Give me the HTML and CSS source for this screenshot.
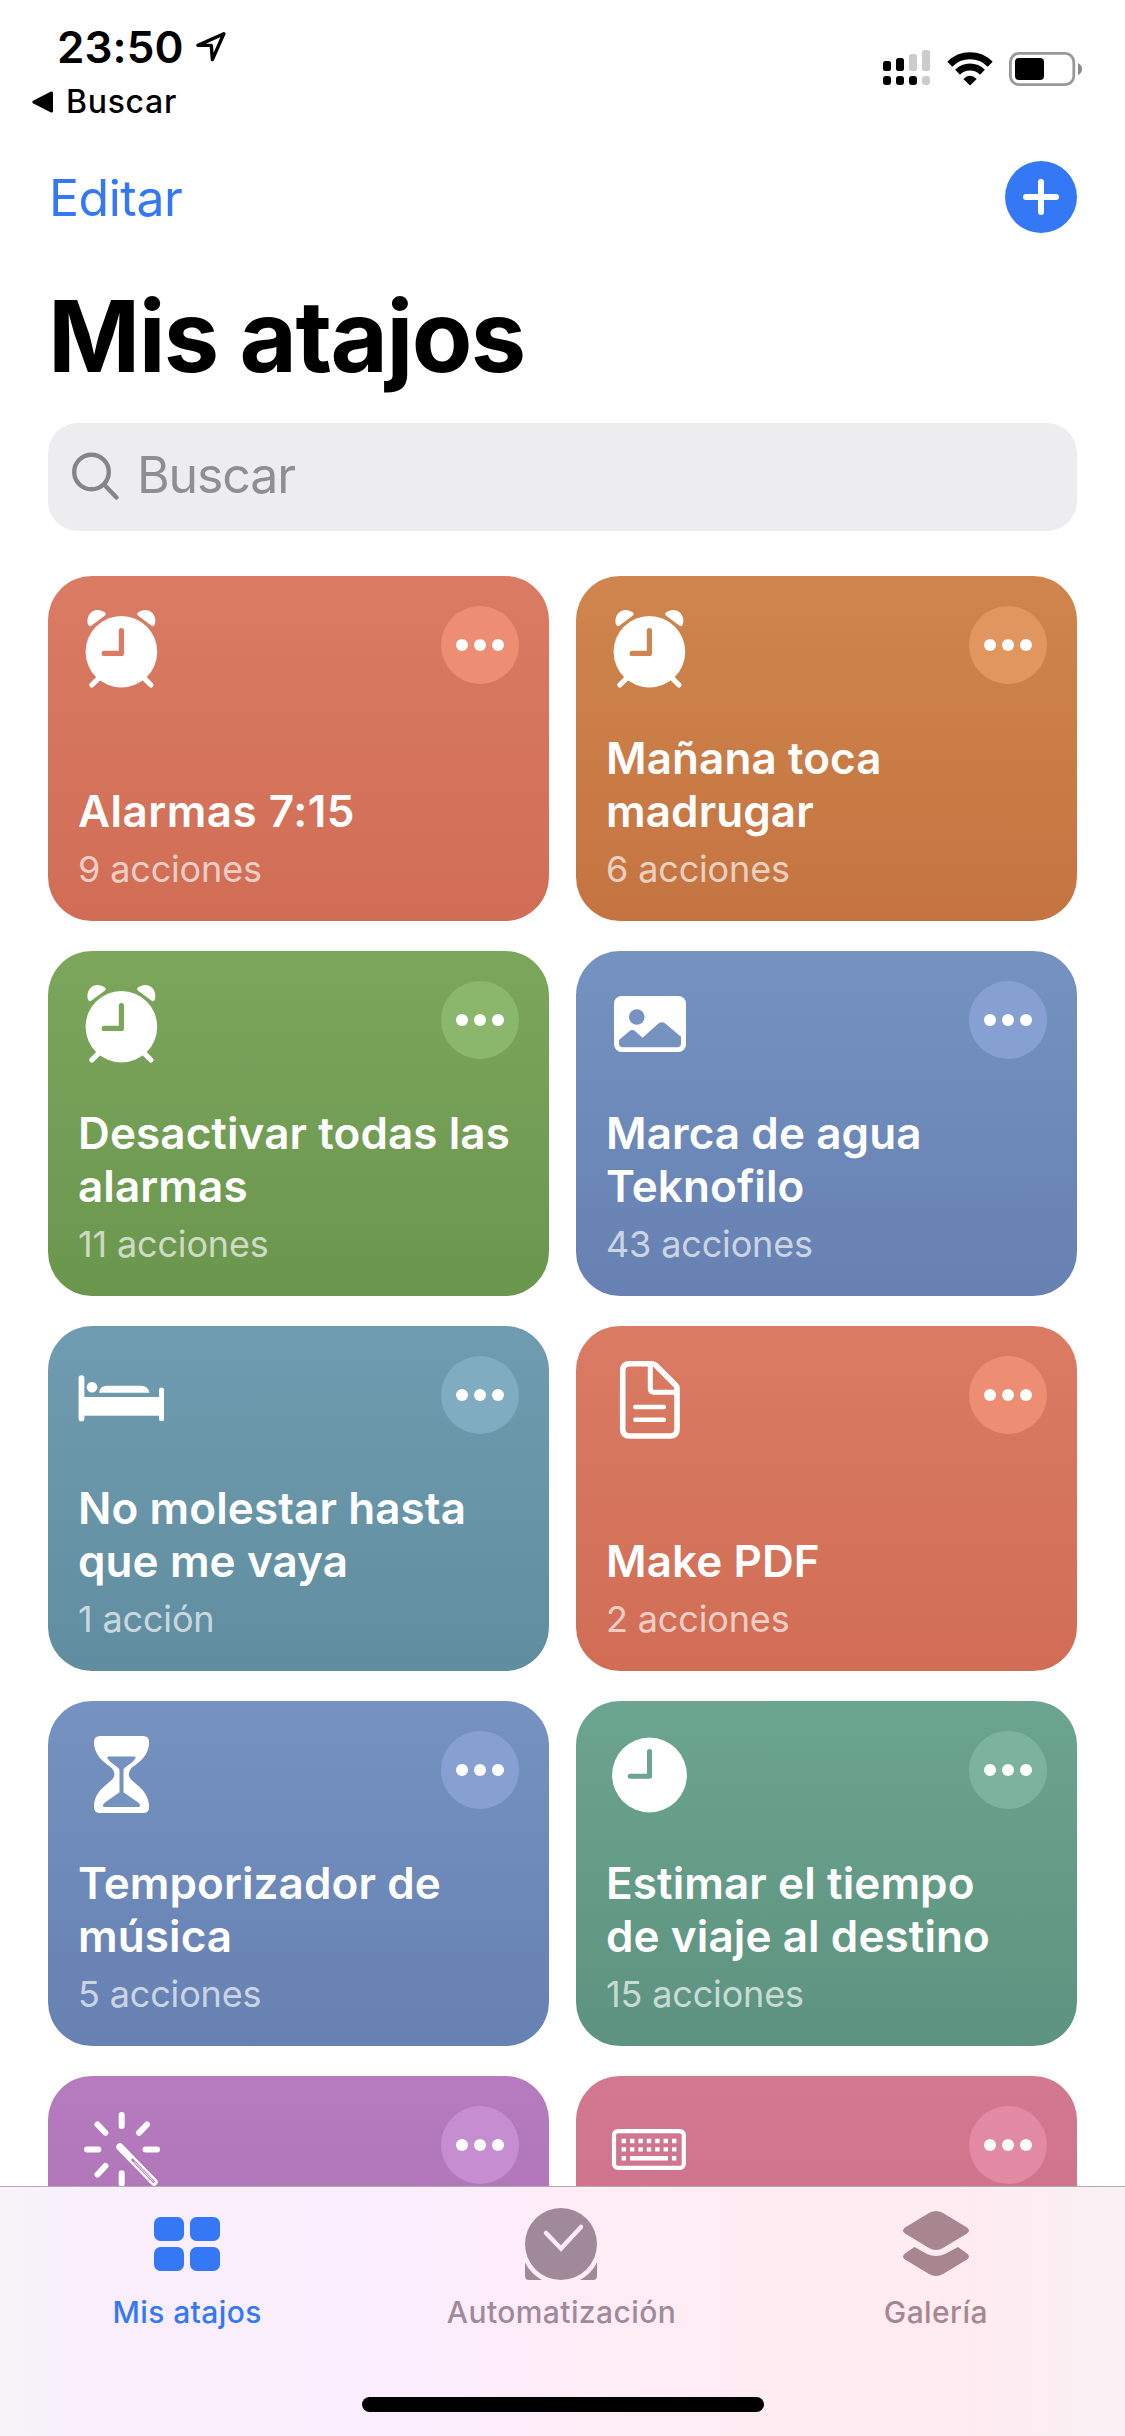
FILE: index.html
```html
<!DOCTYPE html>
<html lang="es">
<head>
    <meta charset="UTF-8">
    <meta name="viewport" content="width=device-width, initial-scale=1.0">
    <title>Mis atajos</title>
    <link rel="stylesheet" href="styles.css">
</head>
<body>
<!-- shared icons -->
<svg class="sprite" width="0" height="0">
    <symbol id="alarm" viewBox="0 0 87 87">
        <path d="M13.5 19.6L27 9.6Q28.6 8.2 27 6.6C22 3 16 3.3 12.5 7C9.5 10 9 14.5 9.8 18Q10.8 21.2 13.5 19.6Z"/>
        <path d="M73.3 19.6L59.8 9.6Q58.2 8.2 59.8 6.6C64.8 3 70.8 3.3 74.3 7C77.3 10 77.8 14.5 77 18Q76 21.2 73.3 19.6Z"/>
        <circle cx="43.4" cy="45.8" r="35.8"/>
        <path class="line" stroke-width="5.2" d="M13.8 79L20 72.8M73 79L66.8 72.8"/>
        <path class="cut-line" stroke-width="5.2" d="M43.4 24.6V47.4H26.2"/>
    </symbol>
    <symbol id="more" viewBox="0 0 78 78">
        <circle cx="21" cy="39" r="6"/><circle cx="39" cy="39" r="6"/><circle cx="57" cy="39" r="6"/>
    </symbol>
</svg>

<div class="phone">
    <header class="status">
        <div class="status-left">
            <div class="time">23:50
                <svg class="location" viewBox="0 0 30 30" width="30" height="30"><path d="M27.8 1.8L2 13.4H15.3L16.4 27.6Z"/></svg>
            </div>
            <div class="back">
                <svg viewBox="0 0 21 22" width="21" height="22"><path d="M19 0.6Q21 0 21 2V20Q21 22 19 21.4L1 12.3Q-0.5 11 1 9.7Z"/></svg>
                <span>Buscar</span>
            </div>
        </div>
        <div class="status-right">
            <svg viewBox="0 0 48 36" width="48" height="36">
                <rect x="0" y="11" width="8" height="10" rx="2.5"/><rect x="13" y="8" width="8" height="13" rx="2.5"/>
                <rect class="off" x="26" y="4" width="8" height="17" rx="2.5"/><rect class="off" x="39" y="0" width="8" height="21" rx="2.5"/>
                <rect x="0" y="26" width="8" height="9" rx="3"/><rect x="13" y="26" width="8" height="9" rx="3"/>
                <rect x="26" y="26" width="8" height="9" rx="3"/><rect class="off" x="39" y="26" width="8" height="9" rx="3"/>
            </svg>
            <svg class="wifi" viewBox="0 0 46 34" width="46" height="34">
                <path class="arc" d="M2.8 12.2A28.5 28.5 0 0 1 43.2 12.2M10.6 20.2A17.5 17.5 0 0 1 35.4 20.2"/>
                <path d="M16.3 27Q23 20.5 29.7 27L23 33.6Z"/>
            </svg>
            <svg viewBox="0 0 74 34" width="74" height="34">
                <rect class="shell" x="1.4" y="1.4" width="63.4" height="31.2" rx="8.5"/>
                <rect x="6" y="6" width="29" height="22" rx="4"/>
                <path class="nub" d="M69 11Q73 13 73 17Q73 21 69 23Z"/>
            </svg>
        </div>
    </header>

    <nav class="navbar">
        <a class="edit">Editar</a>
        <svg class="add" viewBox="0 0 72 72" width="72" height="72"><circle cx="36" cy="36" r="36"/><path d="M36 21V51M21 36H51"/></svg>
    </nav>

    <h1>Mis atajos</h1>

    <div class="search">
        <svg viewBox="0 0 48 49" width="48" height="49"><circle cx="19.5" cy="20" r="17.3"/><path d="M32 32.5L44.5 45.5"/></svg>
        <span>Buscar</span>
    </div>

    <main class="shortcuts">
        <article class="card red">
            <div class="card-top">
                <svg class="icon"><use href="#alarm"/></svg>
                <svg class="more"><use href="#more"/></svg>
            </div>
            <h2 class="digits">Alarmas 7:15</h2>
            <p>9 acciones</p>
        </article>
        <article class="card orange">
            <div class="card-top">
                <svg class="icon"><use href="#alarm"/></svg>
                <svg class="more"><use href="#more"/></svg>
            </div>
            <h2>Mañana toca madrugar</h2>
            <p>6 acciones</p>
        </article>
        <article class="card green">
            <div class="card-top">
                <svg class="icon"><use href="#alarm"/></svg>
                <svg class="more"><use href="#more"/></svg>
            </div>
            <h2>Desactivar todas las alarmas</h2>
            <p>11 acciones</p>
        </article>
        <article class="card blue">
            <div class="card-top">
                <svg class="icon" viewBox="0 0 87 87">
                    <rect x="8" y="15" width="72" height="56" rx="7.5"/>
                    <circle class="cut" cx="30.8" cy="36" r="7.8"/>
                    <path class="cut" d="M13 59L23.3 50.2Q26.3 48 29.3 50.2L36.6 56.7L52.5 42.5Q55.9 39.8 59.3 42.5L75 55.8V62.5Q75 66.3 71 66.3H17Q13 66.3 13 62.5Z"/>
                </svg>
                <svg class="more"><use href="#more"/></svg>
            </div>
            <h2>Marca de agua Teknofilo</h2>
            <p>43 acciones</p>
        </article>
        <article class="card teal">
            <div class="card-top">
                <svg class="icon" viewBox="0 0 87 87">
                    <rect x="0.6" y="19.3" width="5.8" height="46" rx="2.9"/>
                    <rect x="81" y="31.5" width="5" height="33.8" rx="2.5"/>
                    <rect x="5" y="41" width="78" height="18.7"/>
                    <circle cx="14" cy="31.3" r="5.3"/>
                    <path d="M21 36.8Q22 29.7 29 29.7H63Q70 29.7 71.5 36.8Z"/>
                </svg>
                <svg class="more"><use href="#more"/></svg>
            </div>
            <h2>No molestar hasta que me vaya</h2>
            <p>1 acción</p>
        </article>
        <article class="card red">
            <div class="card-top">
                <svg class="icon" viewBox="0 0 87 87">
                    <path class="line" stroke-width="5.6" d="M46 7.8H23.7Q16.7 7.8 16.7 14.8V73Q16.7 80 23.7 80H64Q71 80 71 73V32.5Q71 30.5 69.5 29L50 9.5Q48.3 7.8 46 7.8Z"/>
                    <path class="line" stroke-width="5" d="M44.3 9V32.5Q44.3 36.2 48 36.2H70"/>
                    <path class="line" stroke-width="4.4" d="M29.3 51H57.8M29.3 63.7H57.8"/>
                </svg>
                <svg class="more"><use href="#more"/></svg>
            </div>
            <h2>Make PDF</h2>
            <p>2 acciones</p>
        </article>
        <article class="card blue">
            <div class="card-top">
                <svg class="icon" viewBox="0 0 87 87">
                    <path d="M22 5H65.2Q71.1 5 71.1 11C71.1 27 57 33.5 53 37.5Q48.5 43.3 53 48.5C57 53 71.1 60 71.1 76Q71.1 82 65.2 82H22Q16 82 16 76C16 60 30.2 53 34.2 48.5Q38.7 43.3 34.2 37.5C30.2 33.5 16 27 16 11Q16 5 22 5Z"/>
                    <path class="cut" d="M30.5 25.4H56.5Q58.3 26 57.3 27.6C54.5 32.5 46 36 45.5 39V61.3L60.5 71.8Q63.5 74.5 61 76H26Q23.6 74.5 26.6 71.8L41.5 61.3V39C41 36 32.4 32.5 29.6 27.6Q28.7 26 30.5 25.4Z"/>
                </svg>
                <svg class="more"><use href="#more"/></svg>
            </div>
            <h2>Temporizador de música</h2>
            <p>5 acciones</p>
        </article>
        <article class="card mint">
            <div class="card-top">
                <svg class="icon" viewBox="0 0 87 87">
                    <circle cx="43.5" cy="44" r="37.4"/>
                    <path class="cut-line" stroke-width="5" d="M43.5 20.5V45.3H24.2"/>
                </svg>
                <svg class="more"><use href="#more"/></svg>
            </div>
            <h2>Estimar el tiempo<br>de viaje al destino</h2>
            <p>15 acciones</p>
        </article>
        <article class="card purple">
            <div class="card-top">
                <svg class="icon" viewBox="0 0 87 87">
                    <path class="line" stroke-width="6" d="M43.7 9V20M43.7 67.3V77.7M9 43.4H20.3M67.5 43.4H79M19.5 18.5L27.4 26.8M69 18.5L61 26.8M27.4 60L19.5 68.5"/>
                    <path class="line" stroke-width="7.4" d="M42 41L76 76"/>
                    <path class="cut-line" stroke-width="2.6" d="M54.5 53.8L75.6 75.6"/>
                    <path class="line" stroke-width="1" d="M56.5 55.8L75 75"/>
                </svg>
                <svg class="more"><use href="#more"/></svg>
            </div>
        </article>
        <article class="card pink">
            <div class="card-top">
                <svg class="icon" viewBox="0 0 87 87">
                    <rect class="line" stroke-width="4.2" x="8" y="25.1" width="69.8" height="36.8" rx="4"/>
                    <path class="keys" d="M15.6 35H70.4M15.6 43.4H70.4"/>
                    <path d="M15.6 50.1h4.4v4.4h-4.4zM24 50.1h38v4.4H24zM65.9 50.1h4.4v4.4h-4.4z"/>
                </svg>
                <svg class="more"><use href="#more"/></svg>
            </div>
        </article>
    </main>

    <footer class="tabbar">
        <div class="tabs">
            <div class="tab active">
                <svg viewBox="0 0 72 72">
                    <rect x="3" y="9" width="30" height="24" rx="6.5"/><rect x="39" y="9" width="30" height="24" rx="6.5"/>
                    <rect x="3" y="39" width="30" height="24" rx="6.5"/><rect x="39" y="39" width="30" height="24" rx="6.5"/>
                </svg>
                <span>Mis atajos</span>
            </div>
            <div class="tab">
                <svg viewBox="0 0 72 72">
                    <circle cx="36" cy="36" r="36"/>
                    <path class="check" d="M21 25L36 40.5L56 19"/>
                    <path d="M0 54.5A41 41 0 0 0 17 72H4Q0 72 0 68ZM72 54.5A41 41 0 0 1 55 72H68Q72 72 72 68Z"/>
                </svg>
                <span>Automatización</span>
            </div>
            <div class="tab galeria">
                <svg viewBox="0 0 72 72">
                    <path d="M29 5Q36 1 43 5L67 19.5Q71 22.5 67 25.5L43 40Q36 44 29 40L5 25.5Q1 22.5 5 19.5Z"/>
                    <path d="M14.5 39L27 46Q36 50 45 46L58 39L67 45.5Q71 48.5 67 51.5L43 66Q36 70 29 66L5 51.5Q1 48.5 5 45.5Z"/>
                </svg>
                <span>Galería</span>
            </div>
        </div>
        <div class="home"></div>
    </footer>
</div>
</body>
</html>
```
FILE: styles.css
```css
*{
    margin: 0;
    padding: 0;
    box-sizing: border-box;
}

body{
    font-family: Inter, "Liberation Sans", sans-serif;
    background-color: white;
    color: black;
}

svg{
    display: block;
    flex: none;
}

.sprite{
    position: absolute;
}

.phone{
    display: flex;
    flex-direction: column;
    width: 1125px;
    height: 2436px;
    overflow: hidden;
}

/* status bar */
.status{
    display: flex;
    justify-content: space-between;
    height: 161px;
    flex: none;
    padding: 20px 42px 0 32px;
}

.time{
    display: flex;
    padding-left: 25px;
    font-size: 44px;
    line-height: 54px;
    font-weight: 600;
    letter-spacing: 0.1px;
}

.location{
    margin: 12px 0 0 12px;
    fill: none;
    stroke: black;
    stroke-width: 3.4;
    stroke-linejoin: round;
}

.back{
    display: flex;
    align-items: center;
    gap: 13px;
    margin-top: 9px;
    font-size: 32px;
    line-height: 38px;
    font-weight: 500;
    letter-spacing: 0.7px;
}

.status-right{
    display: flex;
    align-items: flex-start;
    gap: 16px;
    padding-top: 30px;
}

.status-right svg + svg{
    margin-top: 2px;
}

.off{
    fill: #cccccc;
}

.arc{
    fill: none;
    stroke: black;
    stroke-width: 7;
}

.shell{
    fill: none;
    stroke: #999999;
    stroke-width: 2.8;
}

.nub{
    fill: #8a8a8a;
}

/* top of the page */
.navbar{
    display: flex;
    justify-content: space-between;
    height: 72px;
    flex: none;
    padding: 0 48px 0 49px;
}

.edit{
    color: #3478f6;
    font-size: 50px;
    line-height: 75px;
    letter-spacing: -0.5px;
}

.add circle{
    fill: #3478f6;
}

.add path{
    stroke: white;
    stroke-width: 6;
    stroke-linecap: round;
}

h1{
    flex: none;
    margin: 43px 48px 27px;
    font-size: 99px;
    line-height: 120px;
    font-weight: 700;
    letter-spacing: -1.6px;
}

.search{
    display: flex;
    align-items: center;
    gap: 17px;
    height: 108px;
    flex: none;
    margin: 0 48px;
    padding: 0 24px 4px;
    border-radius: 30px;
    background-color: #ededef;
    color: #8e8e93;
    font-size: 50px;
    letter-spacing: -1.1px;
}

.search svg{
    fill: none;
    stroke: #858589;
    stroke-width: 4.4;
    stroke-linecap: round;
    margin-top: 3px;
}

/* cards */
.shortcuts{
    display: grid;
    grid-template-columns: 501px 501px;
    grid-auto-rows: 345px;
    gap: 30px 27px;
    flex: 1;
    min-height: 0;
    margin-top: 45px;
    padding: 0 48px;
    overflow: hidden;
}

.card{
    display: flex;
    flex-direction: column;
    padding: 30px;
    border-radius: 44px;
    color: white;
    background-image: linear-gradient(to bottom, var(--top), var(--bottom));
}

.card-top{
    display: flex;
    justify-content: space-between;
    align-items: flex-start;
    margin-bottom: auto;
}

.icon{
    width: 87px;
    height: 87px;
    fill: white;
}

.line{
    fill: none;
    stroke: white;
    stroke-linecap: round;
    stroke-linejoin: round;
}

.cut{
    fill: var(--top);
}

.cut-line{
    fill: none;
    stroke: var(--top);
    stroke-linecap: round;
    stroke-linejoin: round;
}

.keys{
    stroke: white;
    stroke-width: 4.4;
    stroke-dasharray: 4.4 4;
}

.more{
    width: 78px;
    height: 78px;
    border-radius: 50%;
    background-color: var(--button);
    fill: white;
}

h2{
    font-size: 44px;
    line-height: 53px;
    font-weight: 600;
    letter-spacing: 0.1px;
}

.digits{
    letter-spacing: 0.5px;
}

.card p{
    margin-top: 9px;
    font-size: 36px;
    line-height: 44px;
    letter-spacing: -0.15px;
    color: rgba(255, 255, 255, 0.68);
}

.red{ --top: #da7b63; --bottom: #d16d55; --button: #ed8d74; }
.orange{ --top: #cf854d; --bottom: #c57441; --button: #e2965f; }
.green{ --top: #7ca65c; --bottom: #6a964d; --button: #8bb76d; }
.blue{ --top: #7592c0; --bottom: #6681b2; --button: #86a1d1; }
.teal{ --top: #6f9cb0; --bottom: #608d9f; --button: #7facc0; }
.mint{ --top: #6ba48f; --bottom: #5d9380; --button: #7bb39f; }
.purple{ --top: #b57bbe; --bottom: #a86fb1; --button: #c68ed0; }
.pink{ --top: #d27991; --bottom: #c66b83; --button: #e28aa3; }

/* tab bar */
.tabbar{
    height: 250px;
    flex: none;
    padding-top: 21px;
    border-top: 1px solid #b5a9b4;
    background-image: linear-gradient(to right, #f6f4f9 0%, #faeefd 10%, #fbedfd 38%, #ffecf4 58%, #ffebf1 85%, #f8f0f4 100%);
}

.tabs{
    display: grid;
    grid-template-columns: 1fr 1fr 1fr;
    margin-right: 2px;
}

.tab{
    display: flex;
    flex-direction: column;
    align-items: center;
    gap: 14px;
    color: #a08a9a;
    fill: #a08a9a;
    font-size: 30px;
    line-height: 36px;
    font-weight: 500;
    letter-spacing: 0.4px;
}

.tab svg{
    width: 72px;
    height: 72px;
}

.active{
    color: #3478f6;
    fill: #3478f6;
}

.galeria{
    color: #a8868f;
    fill: #a8868f;
}

.check{
    fill: none;
    stroke: #fdecf8;
    stroke-width: 4.5;
    stroke-linecap: round;
}

.home{
    width: 402px;
    height: 15px;
    margin: 67px auto 0;
    border-radius: 8px;
    background-color: black;
}
```
